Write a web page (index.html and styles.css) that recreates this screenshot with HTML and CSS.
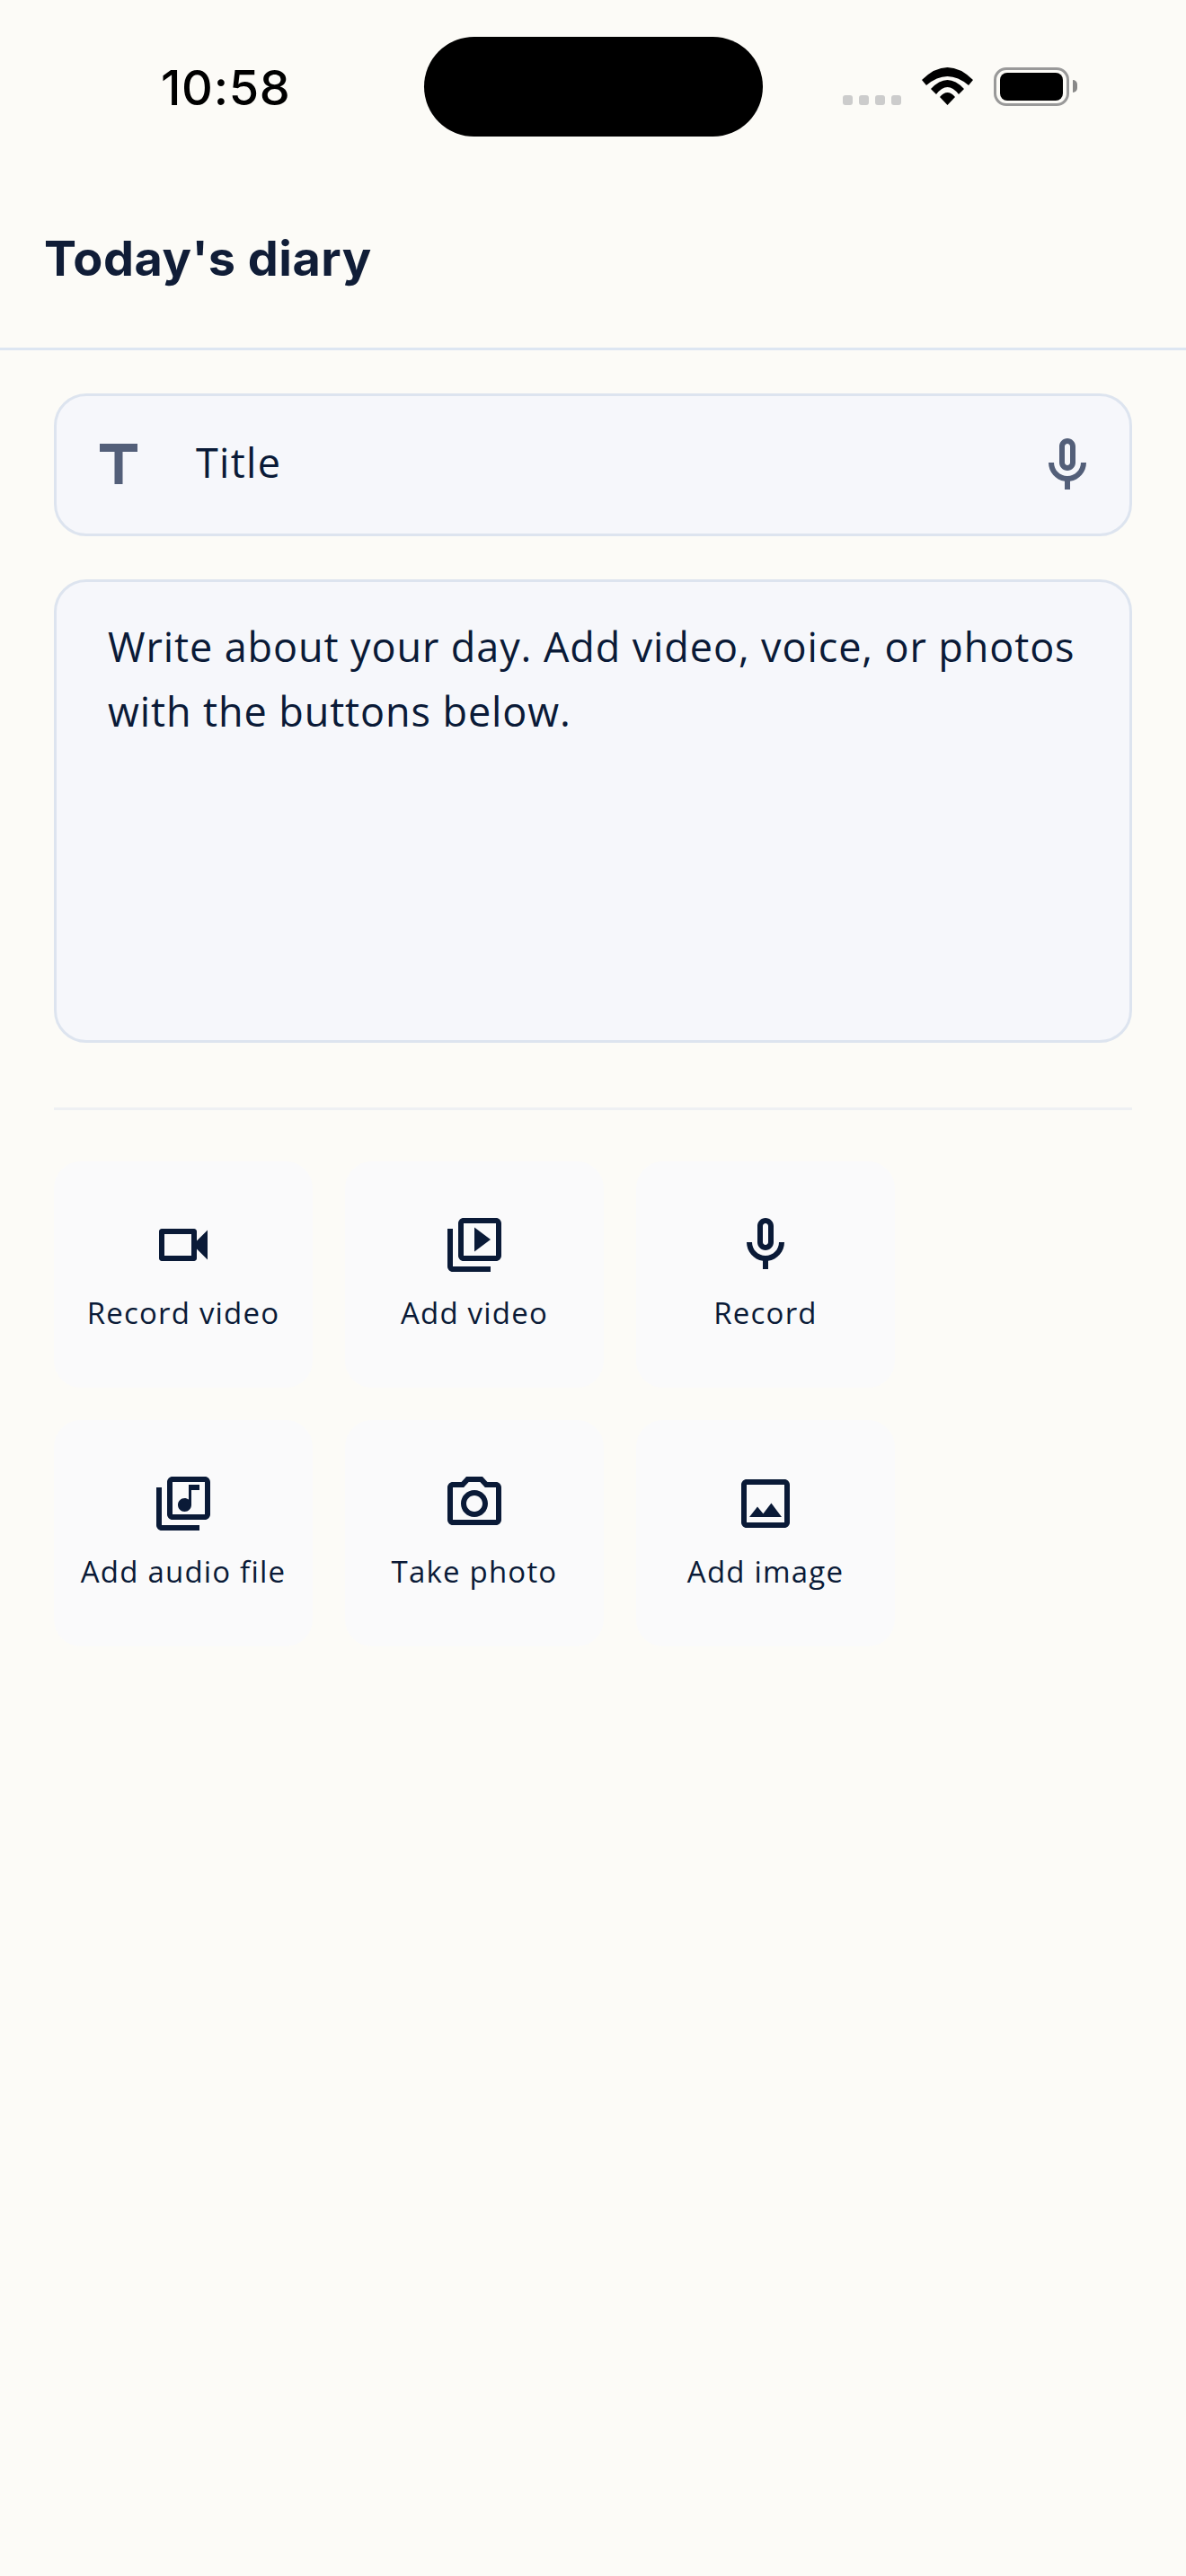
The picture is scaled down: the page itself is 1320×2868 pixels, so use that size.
FILE: index.html
```html
<!DOCTYPE html>
<html lang="en">
<head>
<meta charset="utf-8">
<title>Today's diary</title>
<link rel="stylesheet" href="styles.css">
</head>
<body>
<div class="screen">
  <div class="status">
    <span class="time">10:58</span>
    <div class="island"></div>
    <div class="signal"><i></i><i></i><i></i><i></i></div>
    <svg class="wifi" width="57" height="42" viewBox="0 0 57 42"><path d="M0 14Q28.500 -14 57 14L52 20Q28.500 0 5 20ZM10 24Q28.500 4 47 24L41 30Q28.500 14 16 30ZM20 33Q28.500 23 37 33L28.500 42Z"/></svg>
    <div class="battery"><div class="battery-fill"></div></div>
    <div class="battery-cap"></div>
  </div>
  <header class="topbar"><h1>Today's diary</h1></header>
  <main class="content">
    <div class="title-field">
      <svg class="field-icon" width="72" height="72" viewBox="0 0 24 24"><path d="M5 4v3h5.500v12h3V7H19V4H5z"/></svg>
      <span class="title-text">Title</span>
      <svg class="field-icon" width="72" height="72" viewBox="0 0 24 24"><use href="#mic"/></svg>
    </div>
    <div class="body-field">Write about your day. Add video, voice, or photos with the buttons below.</div>
    <div class="divider"></div>
    <div class="actions">
      <button class="action"><svg width="72" height="72" viewBox="0 0 24 24"><path d="M15 8v8H5V8h10m1-2H4c-.55 0-1 .45-1 1v10c0 .55.45 1 1 1h12c.55 0 1-.45 1-1v-3.500l4 4v-11l-4 4V7c0-.55-.45-1-1-1z"/></svg><span>Record video</span></button>
      <button class="action"><svg width="72" height="72" viewBox="0 0 24 24"><path d="M4 6H2v14c0 1.100.9 2 2 2h14v-2H4V6zm16-4H8c-1.100 0-2 .9-2 2v12c0 1.100.9 2 2 2h12c1.100 0 2-.9 2-2V4c0-1.100-.9-2-2-2zm0 14H8V4h12v12zM12 5.500v9l6-4.500z"/></svg><span>Add video</span></button>
      <button class="action"><svg width="72" height="72" viewBox="0 0 24 24"><use href="#mic"/></svg><span>Record</span></button>
      <button class="action"><svg width="72" height="72" viewBox="0 0 24 24"><path d="M20 2H8c-1.100 0-2 .9-2 2v12c0 1.100.9 2 2 2h12c1.100 0 2-.9 2-2V4c0-1.100-.9-2-2-2zm0 14H8V4h12v12zm-7.500-1c1.380 0 2.500-1.120 2.500-2.500V7h3V5h-4v5.510c-.42-.32-.93-.51-1.500-.51-1.380 0-2.500 1.120-2.500 2.500s1.120 2.500 2.500 2.500zM2 6v14c0 1.100.9 2 2 2h14v-2H4V6H2z"/></svg><span>Add audio file</span></button>
      <button class="action"><svg width="72" height="72" viewBox="0 0 24 24"><path d="M14.120 4l1.830 2H20v12H4V6h4.050l1.830-2h4.240M15 2H9L7.170 4H4c-1.100 0-2 .9-2 2v12c0 1.100.9 2 2 2h16c1.100 0 2-.9 2-2V6c0-1.100-.9-2-2-2h-3.170L15 2zm-3 7c1.650 0 3 1.350 3 3s-1.350 3-3 3-3-1.350-3-3 1.350-3 3-3m0-2c-2.760 0-5 2.240-5 5s2.240 5 5 5 5-2.240 5-5-2.240-5-5-5z"/></svg><span>Take photo</span></button>
      <button class="action"><svg width="72" height="72" viewBox="0 0 24 24"><path d="M19 5v14H5V5h14m0-2H5c-1.100 0-2 .9-2 2v14c0 1.100.9 2 2 2h14c1.100 0 2-.9 2-2V5c0-1.100-.9-2-2-2zm-4.860 8.860l-3 3.870L9 13.140 6 17h12l-3.860-5.140z"/></svg><span>Add image</span></button>
    </div>
  </main>
</div>
<svg class="defs" width="0" height="0">
  <defs>
    <path id="mic" d="M12 14c1.660 0 3-1.340 3-3V5c0-1.660-1.340-3-3-3S9 3.340 9 5v6c0 1.660 1.340 3 3 3zm-1-9c0-.55.45-1 1-1s1 .45 1 1v6c0 .55-.45 1-1 1s-1-.45-1-1V5zm6 6c0 2.760-2.240 5-5 5s-5-2.240-5-5H5c0 3.530 2.610 6.430 6 6.920V21h2v-3.080c3.390-.49 6-3.390 6-6.920h-2z"/>
  </defs>
</svg>
</body>
</html>
```
FILE: styles.css
```css
* { box-sizing: border-box; }
html, body { margin: 0; padding: 0; }
body { background: #fcfbf7; width: 1320px; height: 2868px; overflow: hidden; font-family: "Open Sans", "Noto Sans", sans-serif; color: #0f1c36; }
.screen { display: flex; flex-direction: column; height: 2868px; }
.defs { position: absolute; }
.status { height: 206px; flex: none; display: flex; align-items: flex-start; padding-left: 179px; }
.time { width: 293px; margin-top: 64px; font: 500 54px/68px Inter, sans-serif; color: #000; letter-spacing: 0.7px; flex: none; }
.island { width: 377px; height: 111px; margin-top: 41px; background: #000; border-radius: 58px; flex: none; }
.signal { margin: 106px 0 0 89px; display: flex; gap: 7px; flex: none; }
.signal i { display: block; width: 11px; height: 11px; background: #ccc; border-radius: 3px; }
.wifi { margin: 75px 0 0 23px; flex: none; }
.battery { margin: 75px 0 0 23px; width: 84px; height: 43px; border: 3px solid #999; border-radius: 14px; padding: 3px 4px; flex: none; }
.battery-fill { background: #000; width: 100%; height: 100%; border-radius: 8px; }
.battery-cap { margin: 89px 0 0 4px; width: 5px; height: 14px; background: #888; border-radius: 0 5px 5px 0; flex: none; }
.topbar { height: 184px; flex: none; border-bottom: 3px solid #dde6f2; padding: 0 0 18px 49px; display: flex; align-items: center; }
.topbar h1 { margin: 0; font: 700 54px/66px Inter, sans-serif; letter-spacing: 0.5px; color: #101d37; }
.content { padding: 48px 60px 0; }
.title-field { display: flex; align-items: center; height: 159px; background: #f6f7fb; border: 3px solid #dde4ef; border-radius: 36px; padding: 0 33px; }
.field-icon { fill: #535f79; flex: none; }
.title-text { font-size: 45px; line-height: 60px; margin: 0 0 6px 50px; flex: 1; letter-spacing: 1.300px; color: #0a1a37; }
.body-field { margin-top: 48px; height: 516px; background: #f6f7fb; border: 3px solid #dde4ef; border-radius: 36px; padding: 36px 57px; font-size: 45px; line-height: 72px; letter-spacing: 0.900px; color: #0a1a37; }
.divider { margin-top: 72px; height: 3px; background: #eef0f3; }
.actions { margin-top: 57px; display: grid; grid-template-columns: repeat(3, 288px); column-gap: 36px; row-gap: 36px; }
.action { height: 252px; border: 0; background: #fafafb; border-radius: 30px; display: flex; flex-direction: column; align-items: center; padding: 57px 0 0; gap: 15px; font-family: inherit; color: #0a1a37; }
.action svg { fill: #0a1a37; flex: none; }
.action span { font-size: 33px; line-height: 50px; letter-spacing: 1.200px; white-space: nowrap; }
```
